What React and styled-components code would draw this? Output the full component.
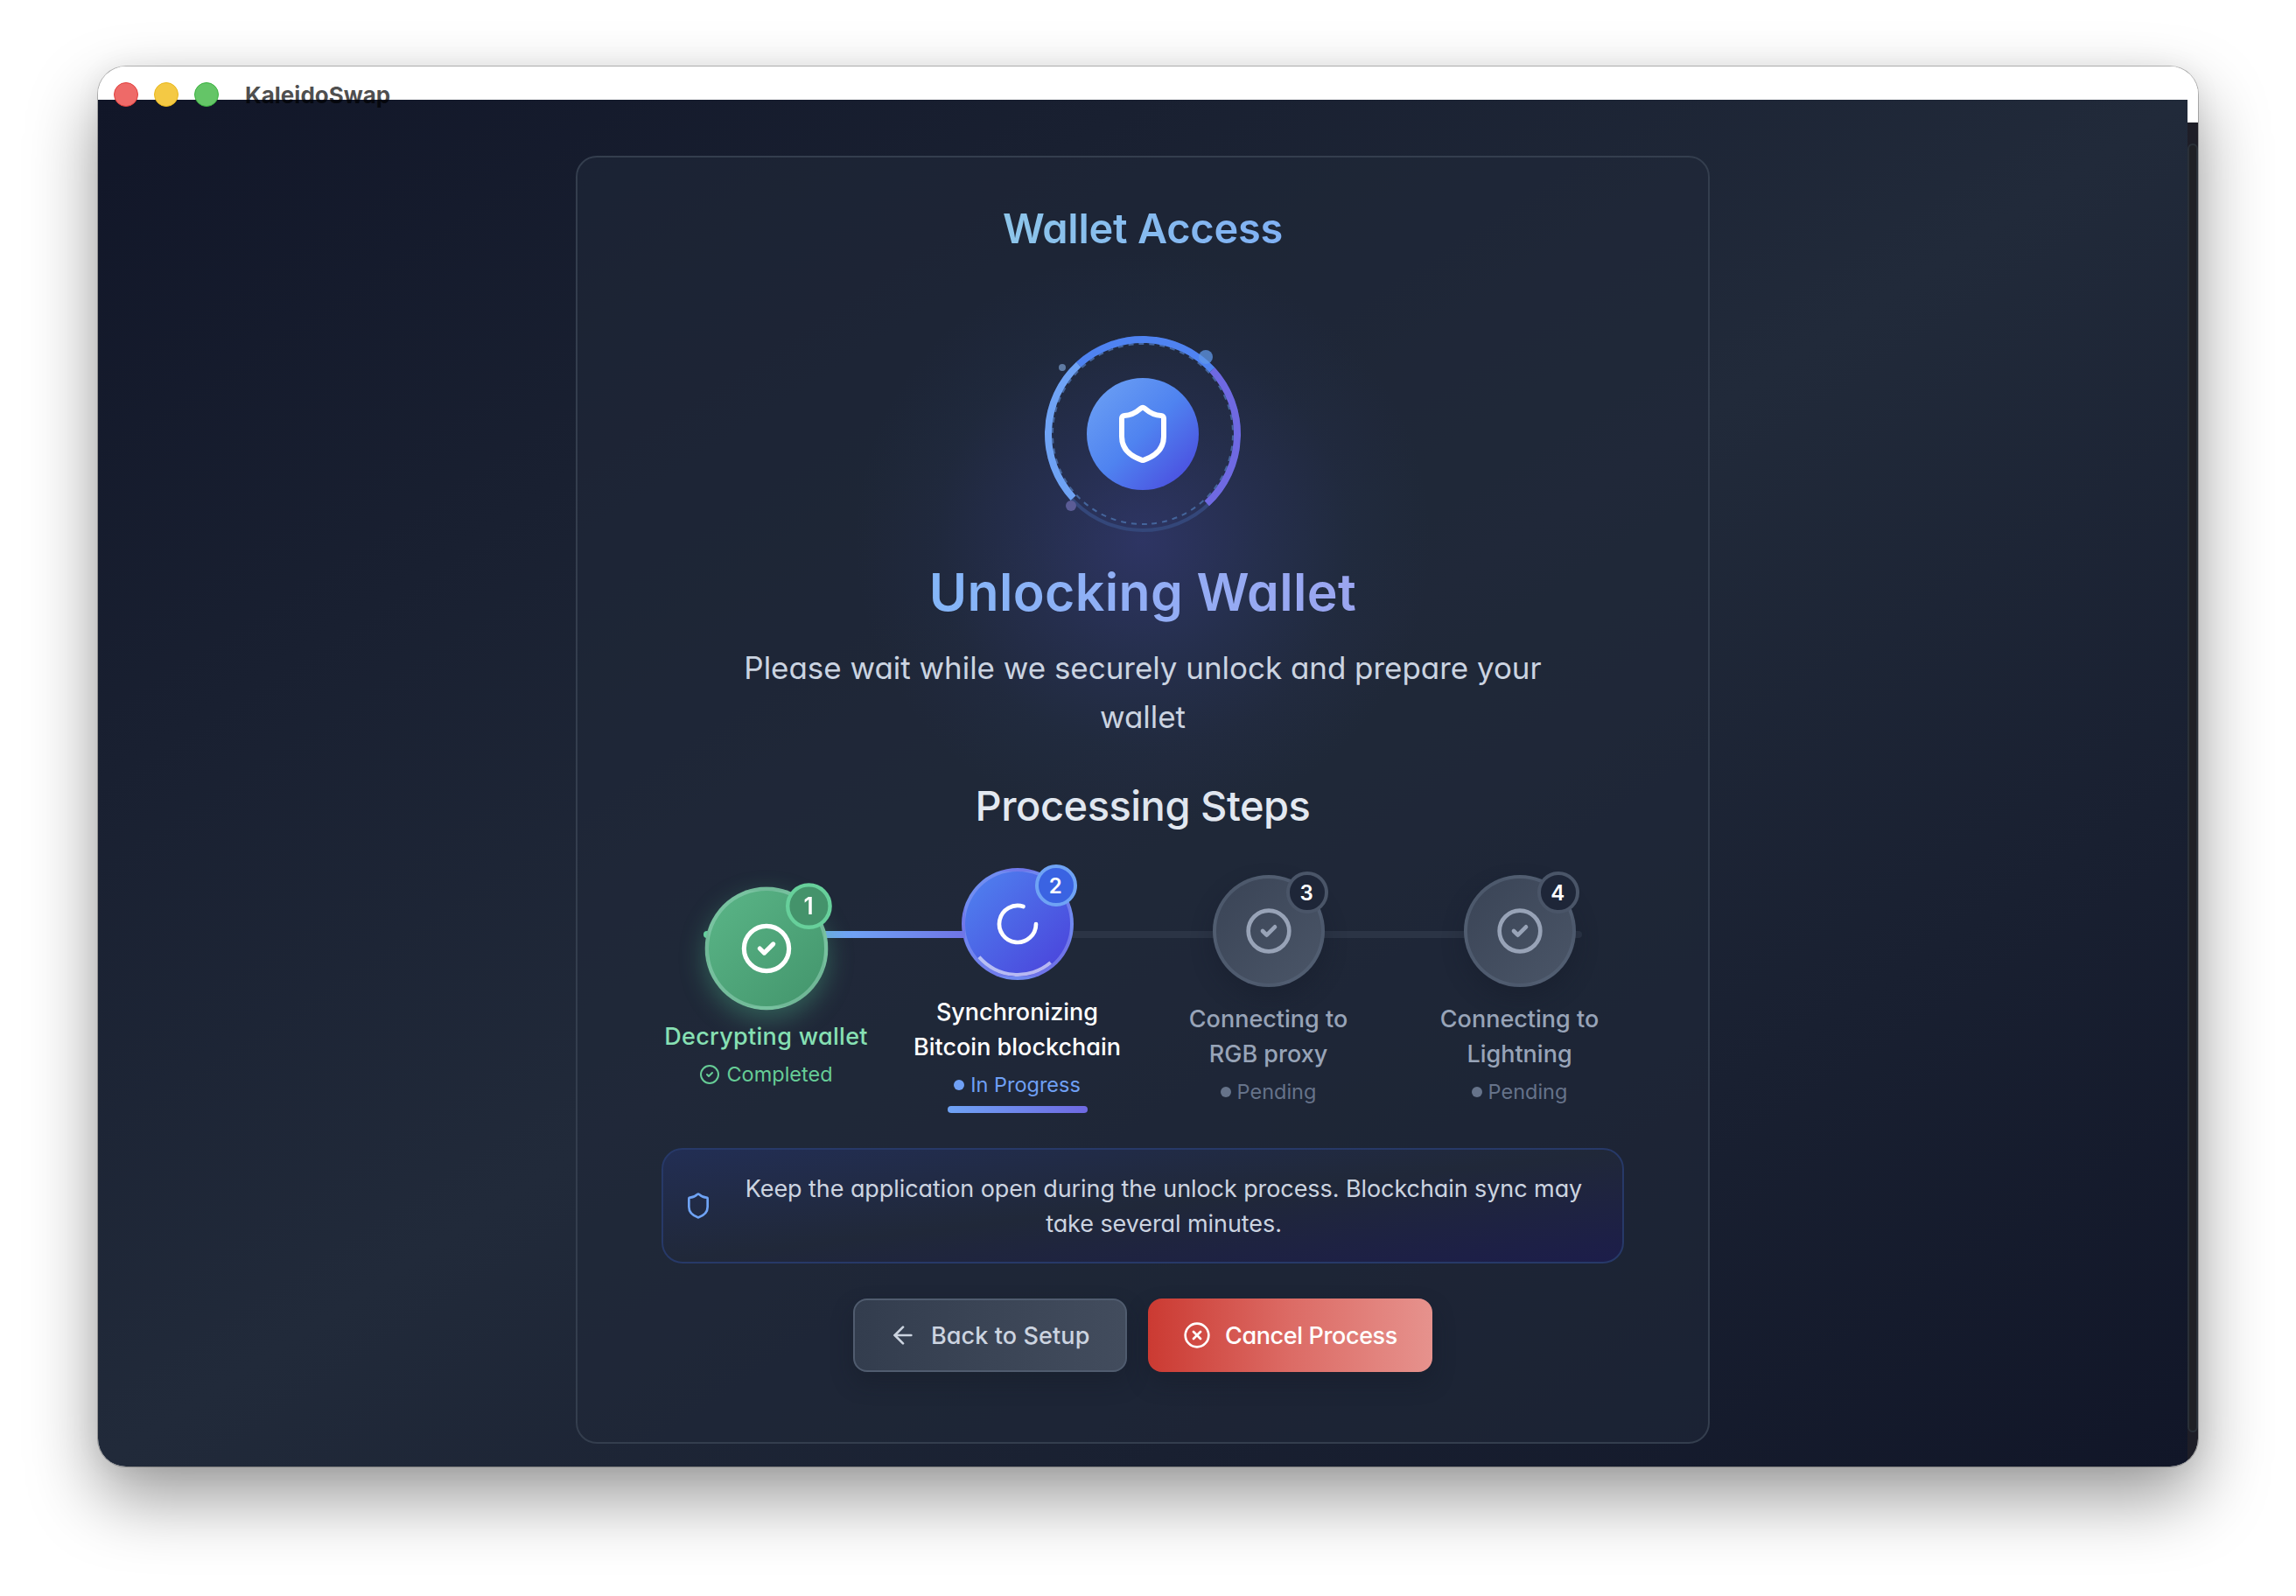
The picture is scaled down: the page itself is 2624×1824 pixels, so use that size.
import React from 'react';
import styled, { createGlobalStyle, css } from 'styled-components';
import { Shield, CircleCheck, LoaderCircle, ArrowLeft, CircleX } from 'lucide-react';

const GlobalStyle = createGlobalStyle`
  * {
    box-sizing: border-box;
  }

  body {
    margin: 0;
    background: #ffffff;
    font-family: Inter, Lato, 'Liberation Sans', sans-serif;
    font-feature-settings: 'cv11';
  }

  svg {
    flex-shrink: 0;
  }
`;

const Desktop = styled.div`
  width: 2624px;
  height: 1824px;
  padding: 76px 112px 148px;
  overflow: hidden;
`;

const Window = styled.div`
  position: relative;
  display: flex;
  flex-direction: column;
  width: 2400px;
  height: 1600px;
  background: #ffffff;
  border-radius: 32px;
  overflow: hidden;
`;

const WindowShadow = styled.div`
  border-radius: 32px;
  box-shadow: 0 0 0 1px rgba(0, 0, 0, 0.25), 0 36px 80px rgba(0, 0, 0, 0.4),
    0 0 30px rgba(0, 0, 0, 0.06);
`;

const TitleBar = styled.div`
  position: absolute;
  top: 0;
  left: 0;
  z-index: 2;
  display: flex;
  align-items: center;
  height: 64px;
  padding-left: 18px;
  gap: 18px;
`;

const Light = styled.span`
  width: 28px;
  height: 28px;
  border-radius: 50%;
  border: 1px solid ${(p) => p.$edge};
  background: ${(p) => p.$color};
`;

const AppName = styled.span`
  margin-left: 12px;
  font-size: 26px;
  font-weight: 700;
  font-feature-settings: normal;
  color: rgba(0, 0, 0, 0.7);
`;

const Body = styled.div`
  display: flex;
  flex: 1;
  padding-top: 38px;
`;

const Page = styled.main`
  display: flex;
  justify-content: center;
  width: 2388px;
  padding-top: 64px;
  background: linear-gradient(to bottom right, #111628, #212a3a 50%, #111628);
`;

const ScrollBar = styled.div`
  width: 12px;
  margin-top: 26px;
  padding: 24px 0 39px;
  background: #1e1e27;
`;

const Thumb = styled.div`
  height: 100%;
  border: 2px solid #2a3038;
  border-radius: 6px;
  background: #1f2025;
`;

const Card = styled.section`
  display: flex;
  flex-direction: column;
  align-items: center;
  width: 1296px;
  height: 1472px;
  padding-top: 49px;
  border: 2px solid #343e4e;
  border-radius: 24px;
  background: rgba(32, 40, 57, 0.6);
`;

const gradientText = css`
  background-clip: text;
  -webkit-background-clip: text;
  color: transparent;
`;

const CardTitle = styled.h1`
  margin: 0;
  font-size: 47px;
  line-height: 64px;
  font-weight: 600;
  letter-spacing: -0.25px;
  background-image: linear-gradient(to right, #8dc5ea, #80b1f4);
  ${gradientText}
`;

const Hero = styled.div`
  position: relative;
  width: 224px;
  height: 224px;
  margin-top: 91px;
`;

const Glow = styled.div`
  position: absolute;
  top: -96px;
  left: -218px;
  width: 660px;
  height: 660px;
  background: radial-gradient(
    closest-side,
    rgba(66, 72, 160, 0.42),
    rgba(58, 70, 145, 0.24) 40%,
    rgba(50, 70, 130, 0.08) 72%,
    transparent
  );
`;

const Rings = styled.svg`
  position: absolute;
  inset: 0;
`;

const Spinner = styled.div`
  position: absolute;
  inset: 0;
  border: 8px solid;
  border-color: #4f83f1 #6f69e2 transparent #6fa3f5;
  border-radius: 50%;
  transform: rotate(2.3deg);
`;

const HeroIcon = styled.div`
  position: absolute;
  inset: 48px;
  display: flex;
  align-items: center;
  justify-content: center;
  border-radius: 50%;
  color: #ffffff;
  background: linear-gradient(to bottom right, #6fa3f4, #4f83f0 50%, #4a42dc);
`;

const Particle = styled.span`
  position: absolute;
  top: ${(p) => p.$top}px;
  left: ${(p) => p.$left}px;
  width: ${(p) => p.$size}px;
  height: ${(p) => p.$size}px;
  border-radius: 50%;
  background: ${(p) => p.$color};
`;

const Heading = styled.h2`
  position: relative;
  margin: 33px 0 0;
  font-size: 59px;
  line-height: 72px;
  font-weight: 600;
  letter-spacing: 0.35px;
  background-image: linear-gradient(to right, #84b6f8, #92aef5 50%, #9ba5f0);
  ${gradientText}
`;

const Lead = styled.p`
  position: relative;
  margin: 22px 0 0;
  font-size: 35px;
  line-height: 56px;
  letter-spacing: -0.04px;
  text-align: center;
  white-space: nowrap;
  color: #cbd4e1;
`;

const SectionTitle = styled.h3`
  margin: 42px 0 0;
  font-size: 47px;
  line-height: 64px;
  font-weight: 500;
  letter-spacing: -0.5px;
  color: #e3e9f1;
`;

const Steps = styled.div`
  position: relative;
  display: grid;
  grid-template-columns: repeat(4, 287px);
  align-items: center;
  margin-top: 39px;
`;

const Track = styled.div`
  position: absolute;
  top: 72px;
  left: 72px;
  width: 1004px;
  height: 8px;
  border-radius: 4px;
  background: #2b3445;
`;

const TrackFill = styled.div`
  width: 33%;
  height: 100%;
  border-radius: 4px;
  background: linear-gradient(to right, #68d39f, #6fa3f5 50%, #6f69e2);
`;

const Step = styled.div`
  position: relative;
  display: flex;
  flex-direction: column;
  align-items: center;
`;

const circleLook = {
  done: css`
    background: linear-gradient(to bottom right, #5ab587, #43956c);
    border-color: rgba(154, 213, 190, 0.5);
    box-shadow: 0 10px 26px rgba(80, 190, 140, 0.36);
    color: #ffffff;
    transform: scale(1.1);
  `,
  active: css`
    background: linear-gradient(to bottom right, #4f84f0, #4a40da);
    border-color: rgba(147, 160, 245, 0.5);
    color: #ffffff;
  `,
  pending: css`
    background: linear-gradient(to bottom right, #3a4456, #4a5567);
    border-color: rgba(88, 101, 122, 0.6);
    box-shadow: 0 12px 24px rgba(20, 25, 40, 0.35);
    color: #98a3b7;
  `,
};

const StepCircle = styled.div`
  position: relative;
  display: flex;
  align-items: center;
  justify-content: center;
  width: 128px;
  height: 128px;
  border: 4px solid;
  border-radius: 50%;
  ${(p) => circleLook[p.$status]}
`;

const ActiveArc = styled.span`
  position: absolute;
  inset: 0;
  border: 4px solid transparent;
  border-bottom-color: rgba(255, 255, 255, 0.6);
  border-radius: 50%;
  transform: rotate(4.5deg);
`;

const badgeLook = {
  done: css`
    background: #44936b;
    border-color: #67d09b;
  `,
  active: css`
    background: #3a63e2;
    border-color: #6fa3f5;
  `,
  pending: css`
    background: #1e2638;
    border-color: #4a5568;
  `,
};

const Badge = styled.span`
  position: absolute;
  top: -8px;
  right: -8px;
  display: flex;
  align-items: center;
  justify-content: center;
  width: 48px;
  height: 48px;
  padding-right: 1px;
  border: 4px solid;
  border-radius: 50%;
  font-size: 24px;
  font-weight: 600;
  letter-spacing: -0.5px;
  color: #ffffff;
  ${(p) => badgeLook[p.$status]}
`;

const labelColor = { done: '#87e0b4', active: '#ffffff', pending: '#98a4b8' };
const statusColor = { done: '#66cc96', active: '#6fa0f5', pending: '#66738a' };

const StepLabel = styled.div`
  margin-top: 17px;
  font-size: 27px;
  line-height: 40px;
  font-weight: 500;
  letter-spacing: ${(p) => (p.$status === 'done' ? '0.3px' : 'normal')};
  text-align: center;
  white-space: pre-line;
  color: ${(p) => labelColor[p.$status]};
`;

const StepStatus = styled.div`
  display: flex;
  align-items: center;
  gap: 7px;
  margin-top: 7px;
  font-size: 23.5px;
  line-height: 32px;
  color: ${(p) => statusColor[p.$status]};
`;

const Dot = styled.span`
  width: 12px;
  height: 12px;
  border-radius: 50%;
  background: currentColor;
`;

const StepBar = styled.div`
  width: 160px;
  height: 8px;
  margin-top: 8px;
  border-radius: 4px;
  background: linear-gradient(to right, #6fa3f5, #6f69e2);
`;

const Notice = styled.div`
  display: flex;
  align-items: center;
  gap: 16px;
  width: 1100px;
  height: 132px;
  margin-top: 40px;
  padding: 0 24px;
  border: 2px solid #273968;
  border-radius: 24px;
  background: linear-gradient(to bottom right, #222e54, #202839 50%, #1c1d4a);
  color: #6fa3f5;
`;

const NoticeText = styled.p`
  flex: 1;
  margin: 0;
  padding-top: 2px;
  font-size: 27px;
  line-height: 40px;
  letter-spacing: -0.08px;
  text-align: center;
  white-space: nowrap;
  color: #ccd4e0;
`;

const Actions = styled.div`
  display: flex;
  gap: 24px;
  margin-top: 40px;
`;

const Button = styled.button`
  display: flex;
  align-items: center;
  gap: 16px;
  height: 84px;
  border: none;
  border-radius: 16px;
  font-family: inherit;
  font-feature-settings: inherit;
  font-size: 27px;
  font-weight: 500;
  white-space: nowrap;
  box-shadow: 0 12px 24px rgba(20, 25, 38, 0.35);
`;

const BackButton = styled(Button)`
  width: 313px;
  padding: 0 0 0 39px;
  border: 2px solid #505c6f;
  letter-spacing: 0.1px;
  color: #ccd4e0;
  background: linear-gradient(to right, #333d4e, #424c5d);
`;

const CancelButton = styled(Button)`
  width: 325px;
  padding: 0 0 0 40px;
  letter-spacing: -0.38px;
  color: #ffffff;
  background: linear-gradient(to right, #cb3a32, #dc6b65 50%, #e6928d);
`;

const steps = [
  { label: 'Decrypting wallet', status: 'done', text: 'Completed' },
  { label: 'Synchronizing\nBitcoin blockchain', status: 'active', text: 'In Progress' },
  { label: 'Connecting to\nRGB proxy', status: 'pending', text: 'Pending' },
  { label: 'Connecting to\nLightning', status: 'pending', text: 'Pending' },
];

const ProcessingStep = ({ step, number }) => {
  const { label, status, text } = step;

  return (
    <Step>
      <StepCircle $status={status}>
        {status === 'active' ? <LoaderCircle size={56} /> : <CircleCheck size={56} />}
        {status === 'active' && <ActiveArc />}
        <Badge $status={status}>{number}</Badge>
      </StepCircle>
      <StepLabel $status={status}>{label}</StepLabel>
      <StepStatus $status={status}>
        {status === 'done' ? <CircleCheck size={24} /> : <Dot />}
        {text}
      </StepStatus>
      {status === 'active' && <StepBar />}
    </Step>
  );
};

const App = () => {
  return (
    <>
      <GlobalStyle />
      <Desktop>
        <WindowShadow>
          <Window>
            <TitleBar>
              <Light $color="#ee6a68" $edge="#e0403d" />
              <Light $color="#f4c944" $edge="#e8b71c" />
              <Light $color="#64c567" $edge="#3bb240" />
              <AppName>KaleidoSwap</AppName>
            </TitleBar>
            <Body>
              <Page>
                <Card>
                  <CardTitle>Wallet Access</CardTitle>
                  <Hero>
                    <Glow />
                    <Rings width="224" height="224" viewBox="0 0 224 224" fill="none">
                      <circle cx="112" cy="112" r="110" stroke="#34477a" strokeWidth="4" />
                      <circle
                        cx="112"
                        cy="112"
                        r="103"
                        stroke="#44659c"
                        strokeWidth="2"
                        strokeDasharray="5.99 5.99"
                        transform="rotate(87.3 112 112)"
                      />
                    </Rings>
                    <Spinner />
                    <HeroIcon>
                      <Shield size={72} />
                    </HeroIcon>
                    <Particle $top={16} $left={176} $size={16} $color="rgba(96, 152, 232, 0.75)" />
                    <Particle $top={32} $left={16} $size={8} $color="#5f7ba3" />
                    <Particle $top={188} $left={24} $size={12} $color="#5b5c96" />
                  </Hero>
                  <Heading>Unlocking Wallet</Heading>
                  <Lead>
                    Please wait while we securely unlock and prepare your
                    <br />
                    wallet
                  </Lead>
                  <SectionTitle>Processing Steps</SectionTitle>
                  <Steps>
                    <Track>
                      <TrackFill />
                    </Track>
                    {steps.map((step, i) => (
                      <ProcessingStep key={i} step={step} number={i + 1} />
                    ))}
                  </Steps>
                  <Notice>
                    <Shield size={32} />
                    <NoticeText>
                      Keep the application open during the unlock process. Blockchain sync may
                      <br />
                      take several minutes.
                    </NoticeText>
                  </Notice>
                  <Actions>
                    <BackButton>
                      <ArrowLeft size={32} />
                      Back to Setup
                    </BackButton>
                    <CancelButton>
                      <CircleX size={32} />
                      Cancel Process
                    </CancelButton>
                  </Actions>
                </Card>
              </Page>
              <ScrollBar>
                <Thumb />
              </ScrollBar>
            </Body>
          </Window>
        </WindowShadow>
      </Desktop>
    </>
  );
};

export default App;
